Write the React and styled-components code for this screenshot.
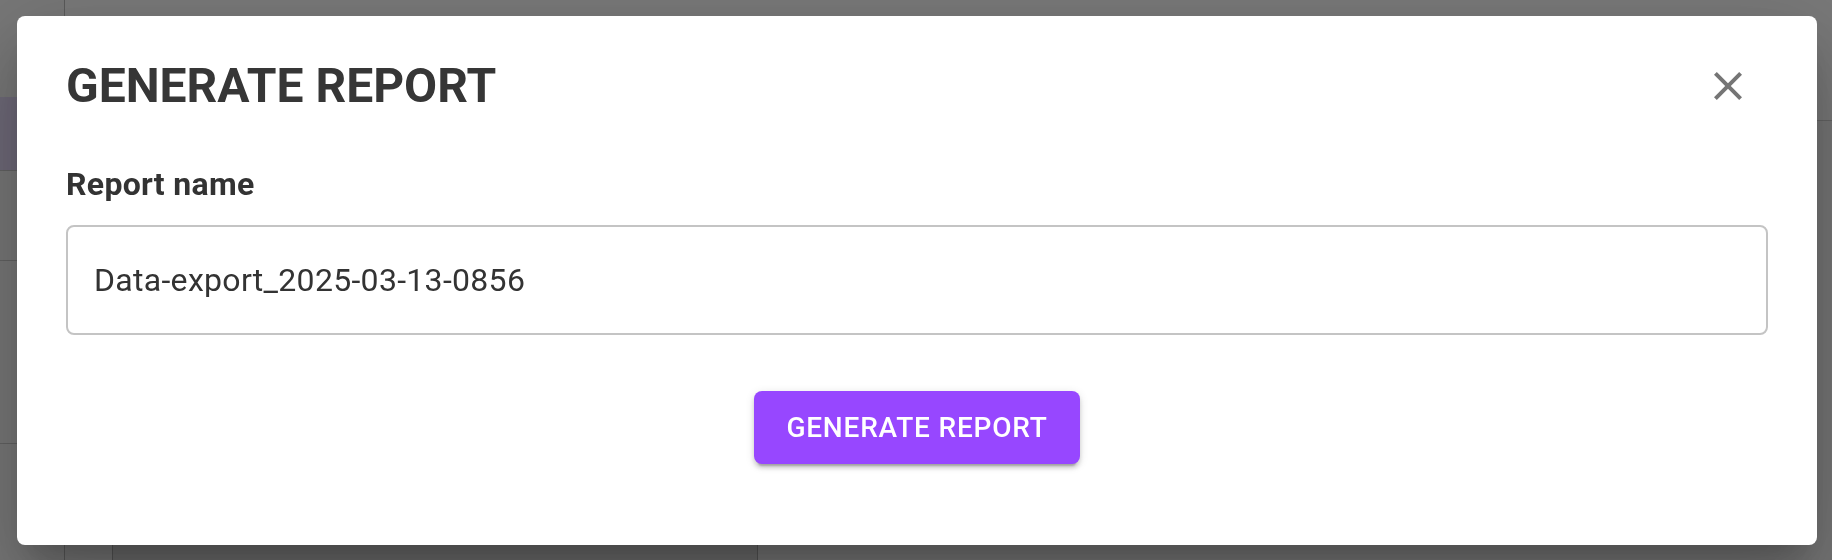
import styled, { createGlobalStyle } from 'styled-components';

const GlobalStyle = createGlobalStyle`
  html, body {
    margin: 0;
    padding: 0;
    height: 100%;
  }
  body {
    font-family: Roboto, "Liberation Sans", sans-serif;
    background: #ececec;
    overflow: hidden;
  }
  #root {
    height: 100%;
  }
`;

const Page = styled.div`
  display: flex;
  height: 100vh;
`;

const Sidebar = styled.nav`
  width: 65px;
  flex-shrink: 0;
  display: flex;
  flex-direction: column;
  padding-top: 97px;
  background: #eeeeee;
  border-right: 1px solid #b4b4b4;
  box-sizing: border-box;
`;

const NavItem = styled.div`
  height: ${({ $h }) => $h}px;
  flex-shrink: 0;
  background: ${({ $active }) => ($active ? '#dcd2f0' : 'transparent')};
  border-bottom: 1px solid #c4c4c4;
`;

const Main = styled.main`
  flex: 1;
  display: flex;
  flex-direction: column;
`;

const TopBar = styled.header`
  height: 120px;
  flex-shrink: 0;
  background: #f2f2f2;
  border-bottom: 1px solid #c8c8c8;
`;

const Content = styled.div`
  flex: 1;
  display: flex;
  align-items: flex-end;
  padding-left: 47px;
`;

const Panel = styled.div`
  width: 644px;
  height: 90px;
  background: #d6d6d6;
  border-left: 1px solid #a8a8a8;
  border-right: 1px solid #a8a8a8;
`;

const Backdrop = styled.div`
  position: fixed;
  inset: 0;
  background: rgba(0, 0, 0, 0.5);
  display: flex;
  align-items: center;
  padding-left: 17px;
`;

const Dialog = styled.div`
  width: 1800px;
  box-sizing: border-box;
  display: flex;
  flex-direction: column;
  padding: 32px 49px 81px;
  background: #fff;
  border-radius: 8px;
  box-shadow: 0 22px 30px -14px rgba(0, 0, 0, 0.2),
    0 48px 76px 6px rgba(0, 0, 0, 0.14),
    0 18px 92px 16px rgba(0, 0, 0, 0.12);
`;

const Header = styled.div`
  display: flex;
  align-items: center;
  justify-content: space-between;
  height: 77px;
`;

const Title = styled.h2`
  margin: 0;
  font-size: 48px;
  font-weight: 700;
  line-height: 1.6;
  color: #363636;
`;

const CloseButton = styled.button`
  display: flex;
  padding: 16px;
  border: none;
  border-radius: 50%;
  background: transparent;
  color: #757575;
  cursor: pointer;
`;

const Label = styled.label`
  margin-top: 35px;
  font-size: 32px;
  font-weight: 700;
  line-height: 48px;
  letter-spacing: 0.3px;
  color: #333;
`;

const TextInput = styled.input`
  margin-top: 17px;
  height: 110px;
  box-sizing: border-box;
  padding: 0 26px;
  border: 2px solid #c4c4c4;
  border-radius: 8px;
  font-family: Roboto, "Liberation Sans", sans-serif;
  font-size: 32px;
  letter-spacing: 0.3px;
  color: #333;
  outline: none;
`;

const Actions = styled.div`
  display: flex;
  justify-content: center;
  margin-top: 56px;
`;

const PrimaryButton = styled.button`
  padding: 12px 32px;
  border: none;
  border-radius: 8px;
  background: #9747ff;
  color: #fff;
  font-family: Roboto, "Liberation Sans", sans-serif;
  font-size: 28px;
  font-weight: 500;
  line-height: 1.75;
  letter-spacing: 0.8px;
  text-transform: uppercase;
  box-shadow: 0 6px 2px -4px rgba(0, 0, 0, 0.2),
    0 4px 4px 0 rgba(0, 0, 0, 0.14),
    0 2px 10px 0 rgba(0, 0, 0, 0.12);
  cursor: pointer;
`;

function CloseIcon() {
  return (
    <svg width="48" height="48" viewBox="0 0 24 24" fill="currentColor">
      <path d="M19 6.41 17.59 5 12 10.59 6.41 5 5 6.41 10.59 12 5 17.59 6.41 19 12 13.41 17.59 19 19 17.59 13.41 12z" />
    </svg>
  );
}

export default function App() {
  return (
    <>
      <GlobalStyle />
      <Page>
        <Sidebar>
          <NavItem $h={73} $active />
          <NavItem $h={89} />
          <NavItem $h={182} />
        </Sidebar>
        <Main>
          <TopBar />
          <Content>
            <Panel />
          </Content>
        </Main>
      </Page>
      <Backdrop>
        <Dialog role="dialog">
          <Header>
            <Title>GENERATE REPORT</Title>
            <CloseButton aria-label="close">
              <CloseIcon />
            </CloseButton>
          </Header>
          <Label htmlFor="report-name">Report name</Label>
          <TextInput id="report-name" defaultValue="Data-export_2025-03-13-0856" />
          <Actions>
            <PrimaryButton>Generate report</PrimaryButton>
          </Actions>
        </Dialog>
      </Backdrop>
    </>
  );
}
